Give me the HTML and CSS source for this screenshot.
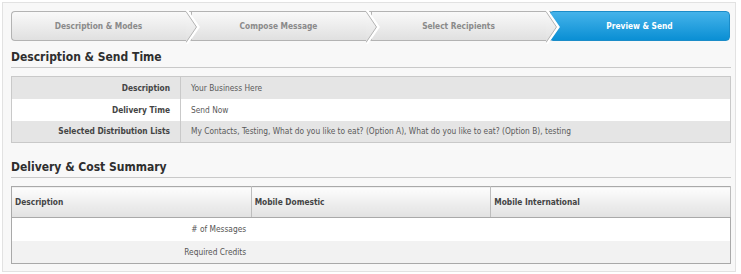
FILE: index.html
```html
<!DOCTYPE html>
<html lang="en">
<head>
  <meta charset="UTF-8" />
  <title>Preview &amp; Send</title>
  <link rel="stylesheet" href="styles.css">
</head>
<body>

<div class="panel">
  <div class="steps">
    <div class="step">
      <span>Description &amp; Modes</span>
      <svg class="tip" width="16" height="34" viewBox="0 0 16 34">
        <defs>
          <linearGradient id="g1" x1="0" y1="0" x2="0" y2="1">
            <stop offset="0" stop-color="#f9f9f9"/>
            <stop offset="1" stop-color="#e0e0e0"/>
          </linearGradient>
        </defs>
        <polyline points="0,0.5 11.5,17 0,33.5" fill="url(#g1)" stroke="#fff" stroke-width="4"/>
        <polyline points="0,1.5 10.5,17 0,32.5" fill="url(#g1)" stroke="#b3b3b3" stroke-width="1"/>
      </svg>
    </div>
    <div class="step">
      <span>Compose Message</span>
      <svg class="tip" width="16" height="34" viewBox="0 0 16 34">
        <polyline points="0,0.5 11.5,17 0,33.5" fill="url(#g1)" stroke="#fff" stroke-width="4"/>
        <polyline points="0,1.5 10.5,17 0,32.5" fill="url(#g1)" stroke="#b3b3b3" stroke-width="1"/>
      </svg>
    </div>
    <div class="step">
      <span>Select Recipients</span>
      <svg class="tip" width="16" height="34" viewBox="0 0 16 34">
        <polyline points="0,0.5 11.5,17 0,33.5" fill="url(#g1)" stroke="#fff" stroke-width="4"/>
        <polyline points="0,1.5 10.5,17 0,32.5" fill="url(#g1)" stroke="#b3b3b3" stroke-width="1"/>
      </svg>
    </div>
    <div class="step active">
      <span>Preview &amp; Send</span>
    </div>
  </div>

  <h2>Description &amp; Send Time</h2>
  <table class="info">
    <tr class="alt">
      <th>Description</th>
      <td>Your Business Here</td>
    </tr>
    <tr>
      <th>Delivery Time</th>
      <td>Send Now</td>
    </tr>
    <tr class="alt">
      <th>Selected Distribution Lists</th>
      <td>My Contacts, Testing, What do you like to eat? (Option A), What do you like to eat? (Option B), testing</td>
    </tr>
  </table>

  <h2 class="second">Delivery &amp; Cost Summary</h2>
  <table class="summary">
    <thead>
      <tr>
        <th>Description</th>
        <th>Mobile Domestic</th>
        <th>Mobile International</th>
      </tr>
    </thead>
    <tbody>
      <tr>
        <td class="label"># of Messages</td>
        <td></td>
        <td></td>
      </tr>
      <tr class="alt">
        <td class="label">Required Credits</td>
        <td></td>
        <td></td>
      </tr>
    </tbody>
  </table>
</div>

</body>
</html>
```

FILE: styles.css
```css
* { box-sizing: border-box; }
body {
  margin: 0;
  background: #fff;
  font-family: 'DejaVu Sans Condensed', 'DejaVu Sans', sans-serif;
  font-size: 8.3px;
  color: #555;
}
.panel {
  margin: 2px;
  width: 734px;
  height: 270px;
  border: 1px solid #e2e2e2;
  background: #f8f8f8;
  padding: 8px 4px 8px 8px;
}
.steps {
  display: flex;
  height: 30px;
  margin-right: 1px;
}
.step {
  flex: 1;
  position: relative;
  display: flex;
  align-items: center;
  justify-content: center;
  border: 1px solid #b3b3b3;
  border-right: none;
  background: linear-gradient(#f9f9f9, #e0e0e0);
  color: #8a8a8a;
  font-weight: bold;
}
.step:first-child {
  border-radius: 4px 0 0 4px;
}
.step span {
  padding-right: 6px;
}
.step .tip {
  position: absolute;
  top: -2px;
  right: -11px;
  z-index: 2;
}
.step.active {
  margin-left: -2px;
  border: 1px solid #1b8cc8;
  border-radius: 4px;
  background: linear-gradient(#45b3ea, #0a8fd4);
  color: #fff;
}
.step.active span {
  padding-right: 0;
}
h2 {
  margin: 6px 0 0;
  font-size: 12px;
  line-height: 20px;
  color: #2e2e2e;
  border-bottom: 1px solid #c9c9c9;
}
h2.second { margin-top: 14px; }
table {
  width: 100%;
  border-collapse: collapse;
  margin-top: 8px;
}
.info {
  border: 1px solid #c9c9c9;
}
.info tr { height: 22px; background: #fff; }
.info tr.alt { background: #e5e5e5; }
.info th {
  width: 169px;
  text-align: right;
  padding: 0 10px 0 0;
  font-weight: bold;
  color: #444;
  border-right: 1px solid #c9c9c9;
}
.info td {
  padding: 0 0 0 10px;
  color: #5a5a5a;
}
.summary {
  border: 1px solid #a9a9a9;
}
.summary thead tr { height: 31px; }
.summary th {
  width: 33.33%;
  text-align: left;
  padding: 0 0 0 3px;
  font-weight: bold;
  color: #444;
  background: linear-gradient(#fdfdfd, #e1e1e1);
  border-right: 1px solid #bdbdbd;
  border-bottom: 1px solid #a9a9a9;
}
.summary td {
  height: 23px;
  background: #fff;
}
.summary tr.alt td { background: #f2f2f2; }
.summary td.label {
  text-align: right;
  padding-right: 5px;
  color: #555;
}
```
